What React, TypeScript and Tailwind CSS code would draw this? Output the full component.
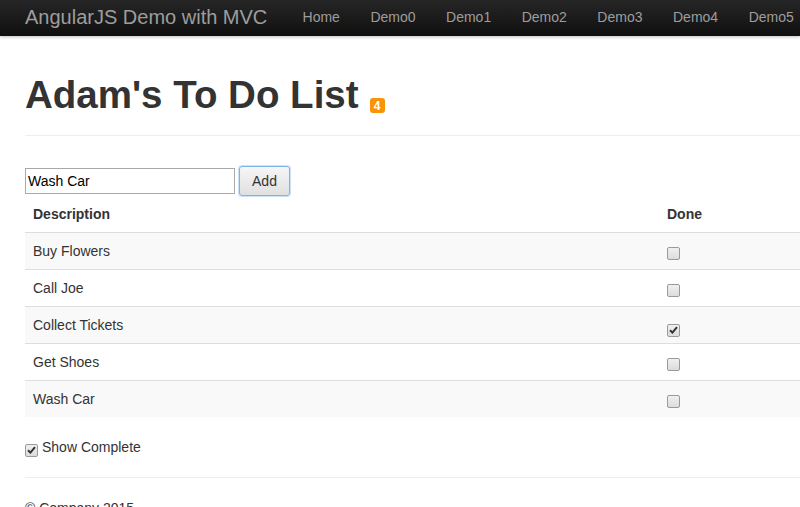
import React from "react";

function Check({ checked }: { checked: boolean }) {
  return (
    <span className="inline-flex h-[13px] w-[13px] items-center justify-center rounded-[2px] border border-[#9a9a9a] bg-gradient-to-b from-[#f0f0f0] to-[#dcdcdc]">
      {checked && (
        <svg width="9" height="8" viewBox="0 0 9 8">
          <path d="M1 4.2 L3.4 6.6 L8 1.2" stroke="#333" strokeWidth="2" fill="none" />
        </svg>
      )}
    </span>
  );
}

const items = [
  { d: "Buy Flowers", done: false },
  { d: "Call Joe", done: false },
  { d: "Collect Tickets", done: true },
  { d: "Get Shoes", done: false },
  { d: "Wash Car", done: false },
];

const links = ["Home", "Demo0", "Demo1", "Demo2", "Demo3", "Demo4", "Demo5"];

export default function App() {
  return (
    <div className="h-[507px] w-[800px] overflow-hidden bg-white text-[14px] leading-[20px] text-[#333]" style={{ fontFamily: '"Liberation Sans", Arial, sans-serif' }}>
      <nav className="flex h-[36px] items-center whitespace-nowrap bg-gradient-to-b from-[#262626] to-[#101010] pb-[3px] pl-[25px] shadow-[0_1px_3px_rgba(0,0,0,0.25)]">
        <span className="text-[20px] leading-[24px] text-[#9d9d9d]">AngularJS Demo with MVC</span>
        <ul className="ml-[20px] flex">
          {links.map((l) => (
            <li key={l} className="px-[15.25px] pt-[1px] text-[#9d9d9d]">
              {l}
            </li>
          ))}
        </ul>
      </nav>
      <div className="pl-[25px]">
        <div className="mt-[38px] flex items-start border-b border-[#eee] pb-[19px]">
          <h1 className="text-[38.5px] font-bold leading-[42px] text-[#333]">Adam's To Do List</h1>
          <span className="ml-[11px] mt-[24px] flex h-[15px] w-[15px] items-center justify-center rounded-[3px] bg-[#f89406] text-[12px] font-bold leading-none text-white">
            4
          </span>
        </div>
        <div className="mt-[30px] flex items-center">
          <div className="flex h-[26px] w-[210px] items-center border border-[#a9a9a9] px-[2px] text-black">Wash Car</div>
          <div className="ml-[4px] flex h-[30px] w-[51px] items-center justify-center rounded-[3px] border border-[#7eb4ea] bg-gradient-to-b from-[#f6f6f6] to-[#e0e0e0] text-[#333] shadow-[0_0_0_1px_rgba(126,180,234,0.4)]">
            Add
          </div>
        </div>
        <table className="w-full border-collapse">
          <thead>
            <tr>
              <th className="w-[634px] border-b border-[#ddd] p-[8px] text-left font-bold">Description</th>
              <th className="border-b border-[#ddd] p-[8px] text-left font-bold">Done</th>
            </tr>
          </thead>
          <tbody>
            {items.map((it, i) => (
              <tr key={it.d} className={i % 2 === 0 ? "bg-[#f9f9f9]" : "bg-white"}>
                <td className={(i === 0 ? "" : "border-t ") + "border-[#ddd] p-[8px]"}>{it.d}</td>
                <td className={(i === 0 ? "" : "border-t ") + "border-[#ddd] p-[8px]"}>
                  <div className="flex h-[20px] items-end pt-[4px]">
                    <span className="translate-y-[4px]">
                      <Check checked={it.done} />
                    </span>
                  </div>
                </td>
              </tr>
            ))}
          </tbody>
        </table>
        <div className="mt-[20px] flex h-[20px] items-center">
          <span className="mt-[4px]">
            <Check checked={true} />
          </span>
          <span className="ml-[4px]">Show Complete</span>
        </div>
        <div className="mt-[20px] border-t border-[#eee]"></div>
        <p className="mt-[20px]">© Company 2015</p>
      </div>
    </div>
  );
}
